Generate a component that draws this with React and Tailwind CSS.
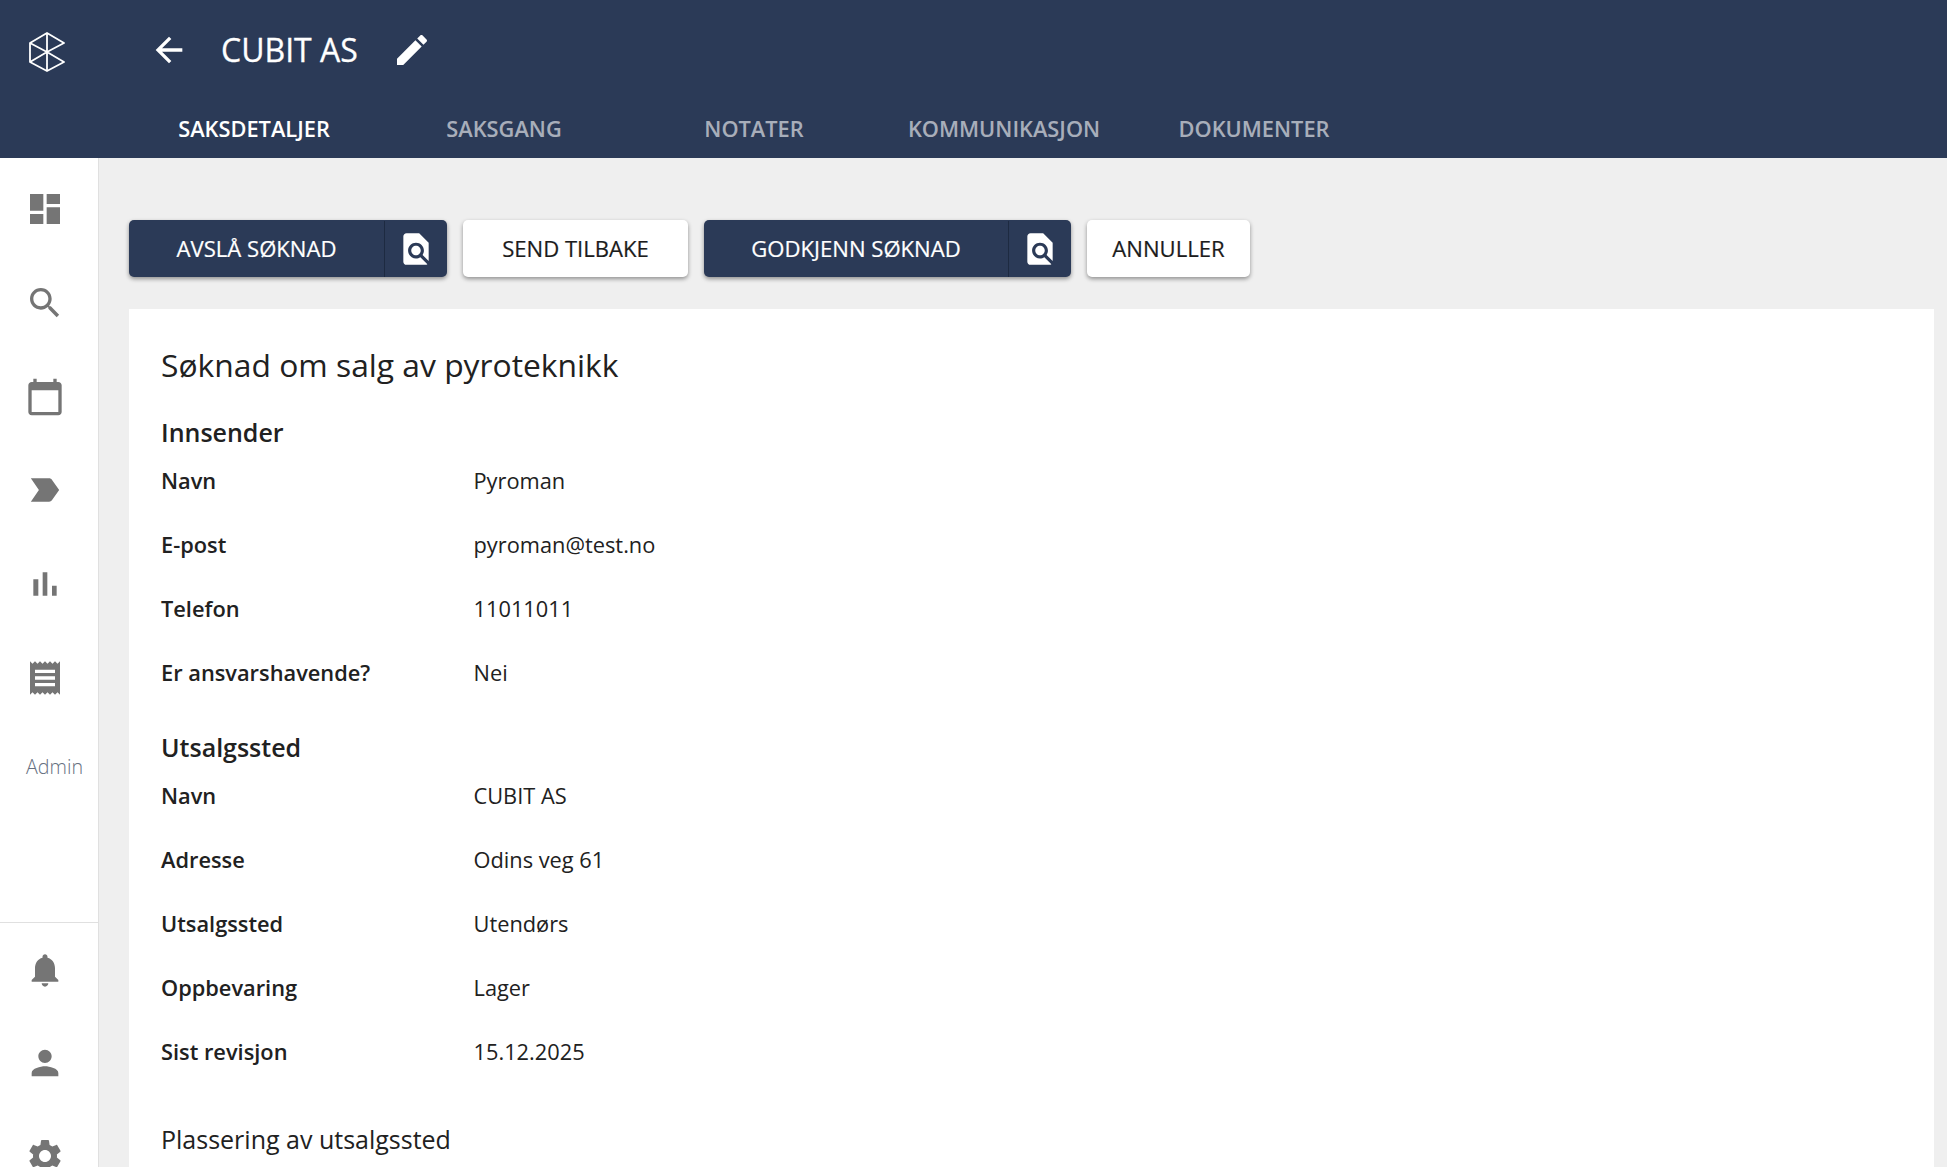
const dashboard = "M3 13h8V3H3v10zm0 8h8v-6H3v6zm10 0h8V11h-8v10zm0-18v6h8V3h-8z";
const search = "M15.5 14h-.79l-.28-.27C15.41 12.59 16 11.11 16 9.5 16 5.91 13.09 3 9.5 3S3 5.91 3 9.5 5.91 16 9.5 16c1.61 0 3.09-.59 4.23-1.57l.27.28v.79l5 4.99L20.49 19l-4.99-5zm-6 0C7.01 14 5 11.99 5 9.5S7.01 5 9.5 5 14 7.01 14 9.5 11.99 14 9.5 14z";
const calendar = "M20 3h-1V1h-2v2H7V1H5v2H4c-1.1 0-2 .9-2 2v16c0 1.1.9 2 2 2h16c1.1 0 2-.9 2-2V5c0-1.1-.9-2-2-2zm0 18H4V8h16v13z";
const label = "M3.5 18.99l11 .01c.67 0 1.27-.33 1.63-.84L20.5 12l-4.37-6.16c-.36-.51-.96-.84-1.63-.84l-11 .01L8.34 12 3.5 18.99z";
const bars = "M5 9.2h3V19H5zM10.6 5h2.8v14h-2.8zm5.6 8H19v6h-2.8z";
const receipt = "M18 17H6v-2h12v2zm0-4H6v-2h12v2zm0-4H6V7h12v2zM3 22l1.5-1.5L6 22l1.5-1.5L9 22l1.5-1.5L12 22l1.5-1.5L15 22l1.5-1.5L18 22l1.5-1.5L21 22V2l-1.5 1.5L18 2l-1.5 1.5L15 2l-1.5 1.5L12 2l-1.5 1.5L9 2 7.5 3.5 6 2 4.5 3.5 3 2v20z";
const bell = "M12 22c1.1 0 2-.9 2-2h-4c0 1.1.89 2 2 2zm6-6v-5c0-3.07-1.64-5.64-4.5-6.32V4c0-.83-.67-1.5-1.5-1.5s-1.5.67-1.5 1.5v.68C7.63 5.36 6 7.92 6 11v5l-2 2v1h16v-1l-2-2z";
const person = "M12 12c2.21 0 4-1.79 4-4s-1.79-4-4-4-4 1.79-4 4 1.79 4 4 4zm0 2c-2.67 0-8 1.34-8 4v2h16v-2c0-2.66-5.33-4-8-4z";
const gear = "M19.14 12.94c.04-.3.06-.61.06-.94 0-.32-.02-.64-.07-.94l2.03-1.58c.18-.14.23-.41.12-.61l-1.92-3.32c-.12-.22-.37-.29-.59-.22l-2.39.96c-.5-.38-1.03-.7-1.62-.94l-.36-2.54c-.04-.24-.24-.41-.48-.41h-3.84c-.24 0-.43.17-.47.41l-.36 2.54c-.59.24-1.13.57-1.62.94l-2.39-.96c-.22-.08-.47 0-.59.22L2.74 8.87c-.12.21-.08.47.12.61l2.03 1.58c-.05.3-.09.63-.09.94s.02.64.07.94l-2.03 1.58c-.18.14-.23.41-.12.61l1.92 3.32c.12.22.37.29.59.22l2.39-.96c.5.38 1.03.7 1.62.94l.36 2.54c.05.24.24.41.48.41h3.84c.24 0 .44-.17.47-.41l.36-2.54c.59-.24 1.13-.56 1.62-.94l2.39.96c.22.08.47 0 .59-.22l1.92-3.32c.12-.22.07-.47-.12-.61l-2.01-1.58zM12 15.6c-1.98 0-3.6-1.62-3.6-3.6s1.62-3.6 3.6-3.6 3.6 1.62 3.6 3.6-1.62 3.6-3.6 3.6z";
const edit = "M3 17.25V21h3.75L17.81 9.94l-3.75-3.75L3 17.25zM20.71 7.04c.39-.39.39-1.02 0-1.41l-2.34-2.34c-.39-.39-1.02-.39-1.41 0l-1.83 1.83 3.75 3.75 1.83-1.83z";
const arrowBack = "M20 11H7.83l5.59-5.59L12 4l-8 8 8 8 1.41-1.41L7.83 13H20v-2z";
const findInPage = "M20 19.59V8l-6-6H6c-1.1 0-1.99.9-1.99 2L4 20c0 1.1.89 2 2 2h12c.45 0 .85-.15 1.19-.4l-4.43-4.43c-.8.52-1.74.83-2.76.83-2.76 0-5-2.24-5-5s2.24-5 5-5 5 2.24 5 5c0 1.02-.31 1.96-.83 2.75L20 19.59zM9 13c0 1.66 1.34 3 3 3s3-1.34 3-3-1.34-3-3-3-3 1.34-3 3z";

function Icon({ d, className }) {
  return (
    <svg viewBox="0 0 24 24" fill="currentColor" className={className}>
      <path d={d} />
    </svg>
  );
}

function Logo() {
  return (
    <svg viewBox="0 0 36 40" fill="none" stroke="white" strokeWidth="1.8" strokeLinejoin="round" className="h-[40px] w-[36px]">
      <path d="M18 1 35 11 18 20 35 30 18 39 1 30V11Z" />
      <path d="M18 1V39M1 11 18 20 1 30" />
    </svg>
  );
}

const tabs = ["SAKSDETALJER", "SAKSGANG", "NOTATER", "KOMMUNIKASJON", "DOKUMENTER"];
const innsender = [
  ["Navn", "Pyroman"],
  ["E-post", "pyroman@test.no"],
  ["Telefon", "11011011"],
  ["Er ansvarshavende?", "Nei"],
];
const utsalgssted = [
  ["Navn", "CUBIT AS"],
  ["Adresse", "Odins veg 61"],
  ["Utsalgssted", "Utendørs"],
  ["Oppbevaring", "Lager"],
  ["Sist revisjon", "15.12.2025"],
];

function Header() {
  return (
    <header className="h-[158px] shrink-0 bg-[#2b3a57] text-white">
      <div className="flex h-[100px] items-start">
        <div className="ml-[29px] mt-[32px] w-[120px]">
          <Logo />
        </div>
        <Icon d={arrowBack} className="mt-[30px] h-[40px] w-[40px]" />
        <h1 className="ml-[32px] mt-[28px] text-[32px] leading-[44px] [-webkit-text-stroke:0.3px]">CUBIT AS</h1>
        <Icon d={edit} className="ml-[34px] mt-[30px] h-[40px] w-[40px]" />
      </div>
      <nav className="ml-[129px] flex">
        {tabs.map((tab, i) => (
          <div
            key={tab}
            className={`flex h-[58px] w-[250px] items-center justify-center text-[21.8px] font-semibold ${i === 0 ? "text-white" : "text-white/60"}`}
          >
            {tab}
          </div>
        ))}
      </nav>
    </header>
  );
}

function Sidebar() {
  return (
    <aside className="flex w-[99px] shrink-0 flex-col overflow-hidden border-r border-[#e0e0e0] bg-white text-[#757575]">
      <div className="flex h-[764px] shrink-0 flex-col items-start pl-[25px] pt-[31px]">
        {[dashboard, search, calendar, label, bars, receipt].map((d) => (
          <Icon key={d} d={d} className="mb-[53.8px] h-[40px] w-[40px]" />
        ))}
        <span className="ml-[1px] mt-[3px] text-[19.7px] font-light leading-[24px] text-[#66707f]">Admin</span>
      </div>
      <div className="flex flex-col items-start border-t border-[#e0e0e0] pl-[25px] pt-[27px]">
        {[bell, person, gear].map((d) => (
          <Icon key={d} d={d} className="mb-[53px] h-[40px] w-[40px] shrink-0" />
        ))}
      </div>
    </aside>
  );
}

function SplitButton({ children, width }) {
  return (
    <div className={`flex h-[57px] items-stretch rounded-[5px] bg-[#2b3a57] pt-px text-white shadow-[0_2px_4px_rgba(0,0,0,0.4)] ${width}`}>
      <span className="flex flex-1 items-center justify-center text-[22.1px] [-webkit-text-stroke:0.2px]">{children}</span>
      <span className="flex w-[63px] items-center justify-center border-l border-[#1d2a41]">
        <Icon d={findInPage} className="h-[38px] w-[38px]" />
      </span>
    </div>
  );
}

function PlainButton({ children, width }) {
  return (
    <div className={`flex h-[57px] items-center justify-center rounded-[5px] bg-white pt-px text-[22.1px] text-[#1c1c1c] shadow-[0_2px_4px_rgba(0,0,0,0.4)] [-webkit-text-stroke:0.2px] ${width}`}>
      {children}
    </div>
  );
}

function Rows({ rows }) {
  return rows.map(([k, v]) => (
    <div key={k} className="flex h-[64px] items-center text-[21.8px] text-[#212121]">
      <span className="w-[312.5px] font-semibold">{k}</span>
      <span>{v}</span>
    </div>
  ));
}

export default function App() {
  return (
    <div className="flex h-[1167px] flex-col overflow-hidden bg-[#efefef] font-['Open_Sans',sans-serif]">
      <Header />
      <div className="flex min-h-0 flex-1">
        <Sidebar />
        <main className="min-w-0 flex-1 pl-[30px] pr-[13px] pt-[62px]">
          <div className="flex gap-[16px]">
            <SplitButton width="w-[318px]">AVSLÅ SØKNAD</SplitButton>
            <PlainButton width="w-[225px]">SEND TILBAKE</PlainButton>
            <SplitButton width="w-[367px]">GODKJENN SØKNAD</SplitButton>
            <PlainButton width="w-[163px]">ANNULLER</PlainButton>
          </div>
          <section className="mt-[32px] h-[900px] bg-white pl-[32px] pt-[35px] text-[#212121]">
            <h2 className="text-[31.8px] leading-[42px]">Søknad om salg av pyroteknikk</h2>
            <h3 className="mt-[29px] text-[25px] font-semibold leading-[34px]">Innsender</h3>
            <div>
              <Rows rows={innsender} />
            </div>
            <h3 className="mt-[25px] text-[25px] font-semibold leading-[34px]">Utsalgssted</h3>
            <div>
              <Rows rows={utsalgssted} />
            </div>
            <p className="mt-[38px] text-[25px] leading-[34px]">Plassering av utsalgssted</p>
          </section>
        </main>
      </div>
    </div>
  );
}
